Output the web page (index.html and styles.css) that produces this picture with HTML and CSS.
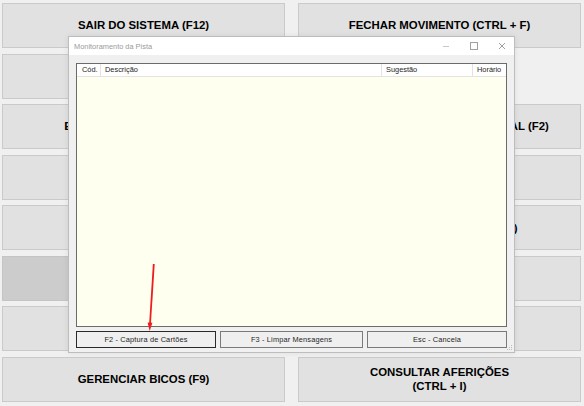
FILE: index.html
```html
<!DOCTYPE html>
<html lang="pt-BR">
<head>
<meta charset="utf-8">
<title>Monitoramento da Pista</title>
<link rel="stylesheet" href="styles.css">
</head>
<body>
<div class="screen">
  <div class="btn">SAIR DO SISTEMA (F12)</div>
  <div class="btn">FECHAR MOVIMENTO (CTRL + F)</div>
  <div class="btn"></div>
  <div class="slot"></div>
  <div class="btn">EMITIR CUPOM FISCAL (F10)</div>
  <div class="btn">LANÇAMENTO DE VENDA MANUAL (F2)</div>
  <div class="btn"></div>
  <div class="btn"></div>
  <div class="btn">RELATÓRIO DO CAIXA (F6)</div>
  <div class="btn">ABERTURA DE TURNO (F11)</div>
  <div class="btn hover"></div>
  <div class="btn"></div>
  <div class="btn"></div>
  <div class="btn"></div>
  <div class="btn">GERENCIAR BICOS (F9)</div>
  <div class="btn">CONSULTAR AFERIÇÕES<br>(CTRL + I)</div>
</div>

<div class="dialog">
  <div class="titlebar">
    <span class="title">Monitoramento da Pista</span>
    <div class="controls">
      <svg class="ctl" width="12" height="10" viewBox="0 0 12 10"><path d="M3 5.5H9" stroke="#c8c8c8" stroke-width="1"/></svg>
      <svg class="ctl" width="12" height="10" viewBox="0 0 12 10"><rect x="2.5" y="1.5" width="7" height="7" fill="none" stroke="#a0a0a0" stroke-width="1"/></svg>
      <svg class="ctl" width="12" height="10" viewBox="0 0 12 10"><path d="M3 2L9 8M9 2L3 8" stroke="#a0a0a0" stroke-width="1"/></svg>
    </div>
  </div>
  <div class="dbody">
    <div class="list">
      <div class="lhead">
        <div class="col c1"><span>Cód.</span></div>
        <div class="col c2"><span>Descrição</span></div>
        <div class="col c3"><span>Sugestão</span></div>
        <div class="col c4"><span>Horário</span></div>
      </div>
      <div class="lrows"></div>
    </div>
    <div class="actions">
      <div class="abtn default">F2 - Captura de Cartões</div>
      <div class="abtn">F3 - Limpar Mensagens</div>
      <div class="abtn">Esc - Cancela</div>
    </div>
  </div>
  <svg class="grip" width="6" height="6" viewBox="0 0 6 6">
    <rect x="4" y="0" width="1" height="1" fill="#bcbcbc"/>
    <rect x="2" y="2" width="1" height="1" fill="#bcbcbc"/>
    <rect x="4" y="2" width="1" height="1" fill="#bcbcbc"/>
    <rect x="0" y="4" width="1" height="1" fill="#bcbcbc"/>
    <rect x="2" y="4" width="1" height="1" fill="#bcbcbc"/>
    <rect x="4" y="4" width="1" height="1" fill="#bcbcbc"/>
  </svg>
</div>

<svg class="arrow" width="20" height="80" viewBox="0 0 20 80">
  <path d="M10.8 2 L7 62" stroke="#ee1c1c" stroke-width="1.8" fill="none"/>
  <path d="M4.6 60.5 L9.4 60.8 L6.7 69 Z" fill="#ee1c1c"/>
</svg>
</body>
</html>
```

FILE: styles.css
```css
html, body {
  margin: 0;
  padding: 0;
  background: #f0f0f0;
  width: 584px;
  height: 406px;
  overflow: hidden;
}

.screen {
  box-sizing: border-box;
  height: 406px;
  padding: 3px 0 0 2px;
  display: grid;
  grid-template-columns: 283px 283px;
  grid-template-rows: repeat(8, 45px);
  column-gap: 13px;
  row-gap: 5.57px;
}

.btn {
  box-sizing: border-box;
  background: #e1e1e1;
  border: 1px solid #cacaca;
  display: flex;
  align-items: center;
  justify-content: center;
  text-align: center;
  font-family: "Liberation Sans", Arial, sans-serif;
  font-weight: bold;
  font-size: 11.4px;
  line-height: 14.5px;
  color: #000;
  white-space: nowrap;
}

.btn.hover {
  background: #cccccc;
  border-color: #c4c4c4;
}

.slot {
  background: transparent;
}

.dialog {
  position: absolute;
  left: 68px;
  top: 36px;
  width: 447px;
  height: 317px;
  box-sizing: border-box;
  border: 1px solid #bdbdbd;
  background: #f0f0f0;
  display: flex;
  flex-direction: column;
  box-shadow: 0 0 6px rgba(0, 0, 0, 0.08);
  font-family: "Liberation Sans", Arial, sans-serif;
}

.titlebar {
  height: 18px;
  background: #ffffff;
  display: flex;
  align-items: center;
  justify-content: space-between;
  padding: 0 0 0 5px;
}

.title {
  font-size: 7.4px;
  color: #9a9a9a;
}

.controls {
  display: flex;
  align-items: center;
  gap: 16px;
  padding-right: 6px;
}

.ctl {
  display: block;
}

.dbody {
  flex: 1;
  padding: 8px 0 0 7px;
  display: flex;
  flex-direction: column;
  gap: 4px;
}

.list {
  box-sizing: border-box;
  width: 431px;
  height: 264px;
  border: 1px solid #6b6b6b;
  background: #fffff0;
  display: flex;
  flex-direction: column;
}

.lhead {
  height: 12px;
  background: #ffffff;
  border-bottom: 1px solid #e3e3e3;
  display: grid;
  grid-template-columns: 24px 281px 91px 1fr;
}

.col {
  box-sizing: border-box;
  font-size: 7.4px;
  line-height: 12px;
  height: 12px;
  color: #1e1e1e;
  padding-left: 4px;
  border-right: 1px solid #e3e3e3;
  white-space: nowrap;
  overflow: hidden;
}

.col.c1 { padding-left: 5px; }
.col.c4 { border-right: none; padding-left: 4px; }

.lrows {
  flex: 1;
}

.actions {
  display: grid;
  grid-template-columns: 140px 143px 140px;
  column-gap: 4px;
}

.abtn {
  box-sizing: border-box;
  height: 17px;
  background: #efefef;
  border: 1px solid #7a7a7a;
  font-size: 7.4px;
  letter-spacing: 0.15px;
  color: #1e1e1e;
  display: flex;
  align-items: center;
  justify-content: center;
}

.abtn.default {
  border: 1.5px solid #2a2a2a;
}

.grip {
  position: absolute;
  right: 1px;
  bottom: 1px;
}

.arrow {
  position: absolute;
  left: 143px;
  top: 262px;
}
```
